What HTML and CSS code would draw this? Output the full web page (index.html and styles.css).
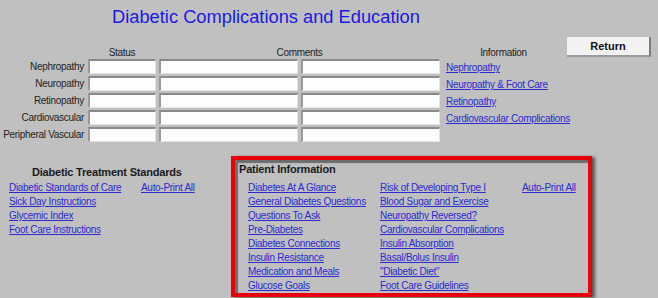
FILE: index.html
```html
<!DOCTYPE html>
<html lang="en">
<head>
    <meta charset="UTF-8">
    <title>Diabetic Complications and Education</title>
    <link rel="stylesheet" href="styles.css">
</head>
<body>
    <div class="title">Diabetic Complications and Education</div>

    <!-- complications grid -->
    <div class="complications">
        <div></div>
        <div class="head">Status</div>
        <div class="head span2">Comments</div>
        <div class="head">Information</div>
        <div class="btn-cell"><button class="return">Return</button></div>

        <div class="label">Nephropathy</div>
        <div class="field"></div>
        <div class="field"></div>
        <div class="field"></div>
        <a class="link info" href="#">Nephropathy</a>
        <div></div>

        <div class="label">Neuropathy</div>
        <div class="field"></div>
        <div class="field"></div>
        <div class="field"></div>
        <a class="link info" href="#">Neuropathy &amp; Foot Care</a>
        <div></div>

        <div class="label">Retinopathy</div>
        <div class="field"></div>
        <div class="field"></div>
        <div class="field"></div>
        <a class="link info" href="#">Retinopathy</a>
        <div></div>

        <div class="label">Cardiovascular</div>
        <div class="field"></div>
        <div class="field"></div>
        <div class="field"></div>
        <a class="link info" href="#">Cardiovascular Complications</a>
        <div></div>

        <div class="label">Peripheral Vascular</div>
        <div class="field"></div>
        <div class="field"></div>
        <div class="field"></div>
        <div></div>
        <div></div>
    </div>

    <div class="lower">
        <!-- treatment standards -->
        <div class="standards">
            <div class="section-title">Diabetic Treatment Standards</div>
            <div class="std-links">
                <a class="link" href="#">Diabetic Standards of Care</a>
                <a class="link" href="#">Auto-Print All</a>
                <a class="link" href="#">Sick Day Instructions</a>
                <span></span>
                <a class="link" href="#">Glycemic Index</a>
                <span></span>
                <a class="link" href="#">Foot Care Instructions</a>
            </div>
        </div>

        <!-- patient information (highlighted) -->
        <div class="patient">
            <div class="patient-title">Patient Information</div>
            <div class="patient-links">
                <div class="col">
                    <a class="link" href="#">Diabetes At A Glance</a>
                    <a class="link" href="#">General Diabetes Questions</a>
                    <a class="link" href="#">Questions To Ask</a>
                    <a class="link" href="#">Pre-Diabetes</a>
                    <a class="link" href="#">Diabetes Connections</a>
                    <a class="link" href="#">Insulin Resistance</a>
                    <a class="link" href="#">Medication and Meals</a>
                    <a class="link" href="#">Glucose Goals</a>
                </div>
                <div class="col">
                    <a class="link" href="#">Risk of Developing Type I</a>
                    <a class="link" href="#">Blood Sugar and Exercise</a>
                    <a class="link" href="#">Neuropathy Reversed?</a>
                    <a class="link" href="#">Cardiovascular Complications</a>
                    <a class="link" href="#">Insulin Absorption</a>
                    <a class="link" href="#">Basal/Bolus Insulin</a>
                    <a class="link" href="#">"Diabetic Diet"</a>
                    <a class="link" href="#">Foot Care Guidelines</a>
                </div>
                <div class="col">
                    <a class="link" href="#">Auto-Print All</a>
                </div>
            </div>
        </div>
    </div>
</body>
</html>
```

FILE: styles.css
```css
* {
    margin: 0;
    padding: 0;
    box-sizing: border-box;
}

body {
    width: 658px;
    height: 298px;
    overflow: hidden;
    background: #c0c0c0;
    font-family: 'Liberation Sans', Arial, sans-serif;
    font-size: 10px;
    letter-spacing: -0.3px;
    color: #1e1e1e;
}

.title {
    padding: 6px 0 0 112px;
    height: 37px;
    font-size: 18.3px;
    letter-spacing: 0;
    color: #1a1ae0;
}

/* 上半部分：并发症表格 */
.complications {
    display: grid;
    grid-template-columns: 85px 68px 139px 139px 121px 84px;
    grid-template-rows: 20px repeat(5, 15px);
    column-gap: 3px;
    row-gap: 2px;
    padding-bottom: 14px;
}

.head {
    align-self: end;
    text-align: center;
    line-height: 12px;
    margin-bottom: -2px;
}

.span2 {
    grid-column: span 2;
}

.btn-cell {
    display: flex;
}

.return {
    width: 84px;
    height: 20px;
    background: #f2f2f2;
    border: none;
    border-right: 2px solid #7c7c7c;
    border-bottom: 2px solid #9a9a9a;
    font-family: inherit;
    font-size: 11px;
    font-weight: bold;
    color: #111;
}

.label {
    text-align: right;
    line-height: 15px;
    padding-right: 1px;
    white-space: nowrap;
}

.field {
    background: #fdfdfd;
    border-top: 2px solid #8a8a8a;
    border-left: 2px solid #9a9a9a;
    border-right: 1px solid #e4e4e4;
    border-bottom: 1px solid #e4e4e4;
}

.link {
    color: #2a2ad0;
    text-decoration: underline;
    white-space: nowrap;
}

.info {
    line-height: 15px;
    padding-left: 3px;
    padding-top: 1px;
}

/* 下半部分 */
.lower {
    display: flex;
    align-items: flex-start;
}

.standards {
    width: 231px;
    padding: 9px 0 0 9px;
}

.section-title,
.patient-title {
    font-weight: bold;
    font-size: 11px;
    line-height: 14px;
    letter-spacing: -0.2px;
    color: #1a1a1a;
}

.section-title {
    padding-left: 23px;
    margin-bottom: 2px;
}

.std-links {
    display: grid;
    grid-template-columns: 132px auto;
    grid-auto-rows: 14px;
    line-height: 14px;
}

.patient {
    width: 361px;
    height: 141px;
    border: 4px solid #e8000c;
    box-shadow: inset 3px 3px 1px #6c6c6c, 3px 1px 3px rgba(0, 0, 0, 0.55);
    padding: 2px 0 0 4px;
}

.patient-title {
    margin-bottom: 5px;
}

.patient-links {
    display: flex;
    padding-left: 9px;
}

.col {
    display: flex;
    flex-direction: column;
    line-height: 14px;
}

.col:nth-child(1) {
    width: 132px;
}

.col:nth-child(2) {
    width: 142px;
}
```
